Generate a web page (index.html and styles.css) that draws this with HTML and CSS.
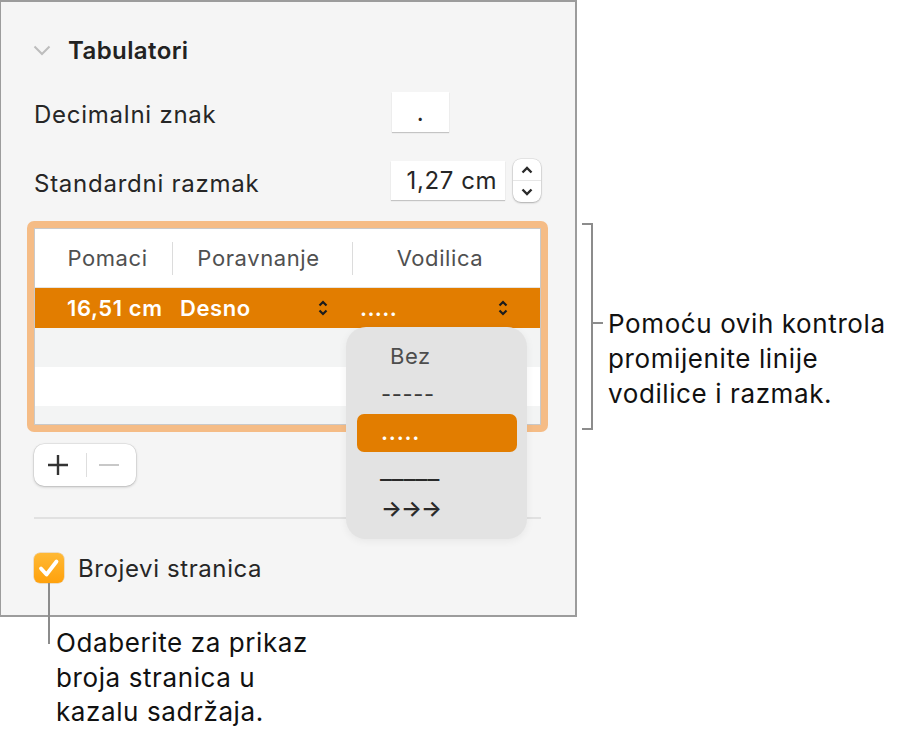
FILE: index.html
```html
<!DOCTYPE html>
<html lang="hr">
<head>
    <meta charset="UTF-8">
    <meta name="viewport" content="width=device-width, initial-scale=1.0">
    <title>Tabulatori</title>
    <link rel="stylesheet" href="styles.css">
</head>
<body>
    <div class="figure">
        <div class="top">
            <section class="panel">
                <div class="section-head">
                    <svg class="chevron" viewBox="0 0 18 11"><path d="M1.5 1.5l7.5 7.5 7.5-7.5"/></svg>
                    <h2>Tabulatori</h2>
                </div>

                <div class="field-row decimal">
                    <span class="label">Decimalni znak</span>
                    <div class="textbox small">.</div>
                </div>

                <div class="field-row spacing">
                    <span class="label">Standardni razmak</span>
                    <div class="textbox wide">1,27 cm</div>
                    <div class="stepper">
                        <span class="step"><svg viewBox="0 0 12 8"><path d="M1.5 6.5l4.5-4.5 4.5 4.5"/></svg></span>
                        <span class="step"><svg viewBox="0 0 12 8"><path d="M1.5 1.5l4.5 4.5 4.5-4.5"/></svg></span>
                    </div>
                </div>

                <div class="tabs-wrap">
                    <div class="tabs">
                        <div class="tabs-head">
                            <span class="head-cell">Pomaci</span>
                            <span class="head-cell">Poravnanje</span>
                            <span class="head-cell">Vodilica</span>
                        </div>
                        <div class="tabs-row selected">
                            <span class="cell pos">16,51 cm</span>
                            <span class="cell pick align">Desno
                                <svg class="updown" viewBox="0 0 10 16"><path d="M1.5 5.5l3.5-3.5 3.5 3.5M1.5 10.5l3.5 3.5 3.5-3.5"/></svg>
                            </span>
                            <span class="cell pick leader-cell">.....
                                <svg class="updown" viewBox="0 0 10 16"><path d="M1.5 5.5l3.5-3.5 3.5 3.5M1.5 10.5l3.5 3.5 3.5-3.5"/></svg>
                            </span>
                        </div>
                        <div class="tabs-row alt"></div>
                        <div class="tabs-row"></div>
                        <div class="tabs-row alt last"></div>
                    </div>

                    <ul class="menu">
                        <li class="none">Bez</li>
                        <li>-----</li>
                        <li class="active">.....</li>
                        <li class="line">_____</li>
                        <li class="arrows">→→→</li>
                    </ul>
                </div>

                <div class="add-remove">
                    <span class="btn">
                        <svg viewBox="0 0 22 22"><path d="M11 1v20M1 11h20"/></svg>
                    </span>
                    <span class="btn-sep"></span>
                    <span class="btn off">
                        <svg viewBox="0 0 22 22"><path d="M1 11h20"/></svg>
                    </span>
                </div>

                <div class="divider"></div>

                <div class="check-row">
                    <span class="checkbox">
                        <svg viewBox="0 0 30 30"><path d="M7 15.5l5.5 6 10-13"/></svg>
                    </span>
                    <span>Brojevi stranica</span>
                </div>
            </section>

            <div class="callout-right">
                <div class="bracket"></div>
                <p>Pomoću ovih kontrola<br>promijenite linije<br>vodilice i razmak.</p>
            </div>
        </div>

        <div class="callout-bottom">
            <p>Odaberite za prikaz<br>broja stranica u<br>kazalu sadržaja.</p>
        </div>
    </div>
</body>
</html>
```

FILE: styles.css
```css
* {
    box-sizing: border-box;
}

body {
    margin: 0;
    background: #fff;
    font-family: "Inter", "Liberation Sans", sans-serif;
    font-size: 24px;
    letter-spacing: 0.6px;
    color: #262626;
}

.figure {
    width: 902px;
    height: 737px;
}

.top {
    display: flex;
    align-items: flex-start;
}

/* inspector panel */
.panel {
    flex: none;
    width: 577px;
    height: 617px;
    background: #f5f5f5;
    border: 2px solid #9c9c9c;
    border-left-width: 1px;
    padding: 0 34px 0 33px;
    display: flex;
    flex-direction: column;
}

.section-head {
    display: flex;
    align-items: center;
    height: 40px;
    margin-top: 28px;
}

.chevron {
    width: 18px;
    height: 11px;
    margin: 0 17px 0 -1px;
    fill: none;
    stroke: #bdbdbd;
    stroke-width: 2;
}

.section-head h2 {
    margin: 0;
    font-size: 24px;
    font-weight: 600;
    letter-spacing: 0.4px;
    color: #222;
}

.field-row {
    display: flex;
    align-items: center;
}

.field-row .label {
    width: 358px;
    padding-top: 5px;
    letter-spacing: 0.75px;
}

.decimal {
    margin-top: 22px;
    height: 40px;
}

.spacing {
    margin-top: 27px;
    height: 43px;
}

.textbox {
    display: flex;
    align-items: center;
    background: #fff;
    box-shadow: 0 1px 1px rgba(0, 0, 0, 0.2);
}

.textbox.small {
    width: 57px;
    height: 40px;
    justify-content: center;
}

.textbox.wide {
    width: 115px;
    height: 39px;
    justify-content: flex-end;
    padding-right: 8px;
}

.stepper {
    width: 28px;
    height: 43px;
    margin-left: 8px;
    background: #fff;
    border-radius: 8px;
    box-shadow: 0 0 0 0.5px rgba(0, 0, 0, 0.12), 0 1px 2px rgba(0, 0, 0, 0.25);
    display: flex;
    flex-direction: column;
}

.step {
    flex: 1;
    display: flex;
    align-items: center;
    justify-content: center;
}

.step:first-child {
    border-bottom: 1px solid #e6e6e6;
}

.step svg {
    width: 12px;
    height: 8px;
    fill: none;
    stroke: #2a2a2a;
    stroke-width: 2.4;
}

/* tab stops table */
.tabs-wrap {
    position: relative;
    width: 521px;
    margin: 19px 0 0 -7px;
    padding: 7px;
    background: #f5bc86;
    border-radius: 7px;
    font-size: 22px;
}

.tabs {
    height: 197px;
    background: #fff;
    border: 1px solid #c9c9c9;
    overflow: hidden;
}

.tabs-head,
.tabs-row {
    display: grid;
    grid-template-columns: 137px 180px 175px;
}

.tabs-head {
    height: 59px;
    align-items: center;
    border-bottom: 1px solid #e4e4e4;
}

.head-cell {
    height: 33px;
    display: flex;
    align-items: center;
    justify-content: center;
    color: #505050;
}

.head-cell:first-child {
    padding-left: 8px;
}

.head-cell:nth-child(2) {
    padding-right: 8px;
}

.head-cell + .head-cell {
    border-left: 1px solid #dcdcdc;
}

.tabs-row {
    height: 39px;
}

.tabs-row.selected {
    height: 40px;
    background: #e27d00;
    color: #fff;
    font-weight: 600;
    align-items: center;
}

.tabs-row.alt {
    background: #f3f4f4;
}

.tabs-row.last {
    height: 20px;
}

.cell {
    display: flex;
    align-items: center;
}

.cell.pos {
    padding-left: 32px;
}

.cell.pick {
    justify-content: space-between;
    padding-left: 8px;
}

.cell.align {
    padding-right: 24px;
}

.cell.leader-cell {
    padding-right: 19px;
    letter-spacing: 0.4px;
}

.updown {
    width: 10px;
    height: 16px;
    fill: none;
    stroke: #1c1c1c;
    stroke-width: 2.2;
}

/* leader popup */
.menu {
    position: absolute;
    left: 319px;
    top: 106px;
    width: 181px;
    height: 212px;
    margin: 0;
    padding: 11px 10px 0 11px;
    list-style: none;
    background: #e3e3e3;
    border-radius: 20px;
    box-shadow: 0 2px 8px rgba(0, 0, 0, 0.06);
    color: #3a3a3a;
}

.menu li {
    height: 38px;
    display: flex;
    align-items: center;
    padding: 0 0 3px 24px;
    border-radius: 7px;
}

.menu li.none {
    padding-left: 33px;
    color: #4d4d4d;
}

.menu li.active {
    background: #e27d00;
    color: #fff;
    font-weight: 600;
    letter-spacing: 0.8px;
}

.menu li.line {
    letter-spacing: 0;
    font-size: 26px;
    padding-left: 23px;
    color: #2a2a2a;
}

.menu li.arrows {
    letter-spacing: -1px;
    color: #2a2a2a;
    font-weight: 600;
}

/* add / remove */
.add-remove {
    display: flex;
    align-items: center;
    width: 102px;
    height: 42px;
    margin-top: 12px;
    padding-left: 13px;
    background: #fff;
    border-radius: 10px;
    box-shadow: 0 0 0 0.5px rgba(0, 0, 0, 0.1), 0 1px 3px rgba(0, 0, 0, 0.22);
}

.btn svg {
    display: block;
    width: 22px;
    height: 22px;
    fill: none;
    stroke: #333;
    stroke-width: 2.4;
}

.btn.off svg {
    stroke: #c8c8c8;
    stroke-width: 2;
}

.btn-sep {
    width: 1px;
    height: 24px;
    margin: 0 11px 0 17px;
    background: #dedede;
}

.divider {
    height: 2px;
    margin-top: 31px;
    background: #e1e1e1;
}

.check-row {
    display: flex;
    align-items: center;
    gap: 14px;
    height: 30px;
    margin-top: 34px;
}

.checkbox {
    position: relative;
    width: 30px;
    height: 30px;
    border-radius: 6px;
    background: linear-gradient(#ffb935, #ffa10c);
    box-shadow: 0 0 0 0.5px rgba(200, 120, 0, 0.4);
}

.checkbox svg {
    display: block;
    width: 30px;
    height: 30px;
    fill: none;
    stroke: #fff;
    stroke-width: 3.8;
    stroke-linecap: round;
    stroke-linejoin: round;
}

/* leader line down to the note */
.checkbox::after {
    content: "";
    position: absolute;
    top: 100%;
    left: 14px;
    width: 2px;
    height: 61px;
    background: #8c8c8c;
}

/* callouts */
.callout-right {
    display: flex;
    align-items: flex-start;
    margin: 223px 0 0 5px;
}

.bracket {
    position: relative;
    flex: none;
    width: 11px;
    height: 207px;
    border: 2px solid #8c8c8c;
    border-left: 0;
}

.bracket::after {
    content: "";
    position: absolute;
    left: 100%;
    top: 97px;
    width: 12px;
    height: 2px;
    background: #8c8c8c;
}

.callout-right p,
.callout-bottom p {
    margin: 0;
    font-size: 26px;
    line-height: 35px;
    color: #111;
}

.callout-right p {
    margin: 83px 0 0 15px;
}

.callout-bottom p {
    margin: 9px 0 0 56px;
    line-height: 34.5px;
}
```
